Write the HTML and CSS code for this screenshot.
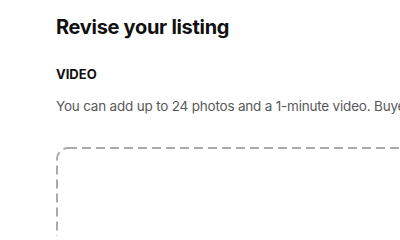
FILE: index.html
```html
<!DOCTYPE html>
<html>
<head>
<meta charset="utf-8">
<link rel="stylesheet" href="styles.css">
</head>
<body>
<main class="page">
  <h1 class="title">Revise your listing</h1>
  <section class="section">
    <h2 class="label">VIDEO</h2>
    <p class="desc">You can add up to 24 photos and a 1-minute video. Buyers want to see all details and angles.</p>
    <div class="dropzone">
      <svg class="dash" width="600" height="200" viewBox="0 0 600 200" aria-hidden="true">
        <rect x="1" y="1" width="598" height="198" rx="11" ry="11" fill="none" stroke="#aaaaaa" stroke-width="2" stroke-dasharray="9 5"/>
      </svg>
    </div>
  </section>
</main>
</body>
</html>
```
FILE: styles.css
```css
html, body {
  margin: 0;
  padding: 0;
  background: #fff;
  overflow: hidden;
  width: 400px;
  height: 236px;
}
.page {
  width: 800px;
  padding: 15px 0 0 56px;
  font-family: Inter, "Noto Sans", sans-serif;
  color: #222;
}
.title {
  margin: 0;
  font-size: 20px;
  line-height: 24px;
  font-weight: 700;
  color: #111;
  letter-spacing: -0.3px;
}
.section {
  display: flex;
  flex-direction: column;
}
.label {
  margin: 26px 0 0;
  font-size: 13px;
  line-height: 18px;
  font-weight: 700;
  color: #111;
}
.desc {
  margin: 13px 0 0;
  font-size: 13.5px;
  line-height: 20px;
  color: #595959;
  white-space: nowrap;
  letter-spacing: -0.2px;
}
.dropzone {
  position: relative;
  margin-top: 31px;
  height: 200px;
  width: 600px;
}
.dash {
  position: absolute;
  inset: 0;
  display: block;
}
```
